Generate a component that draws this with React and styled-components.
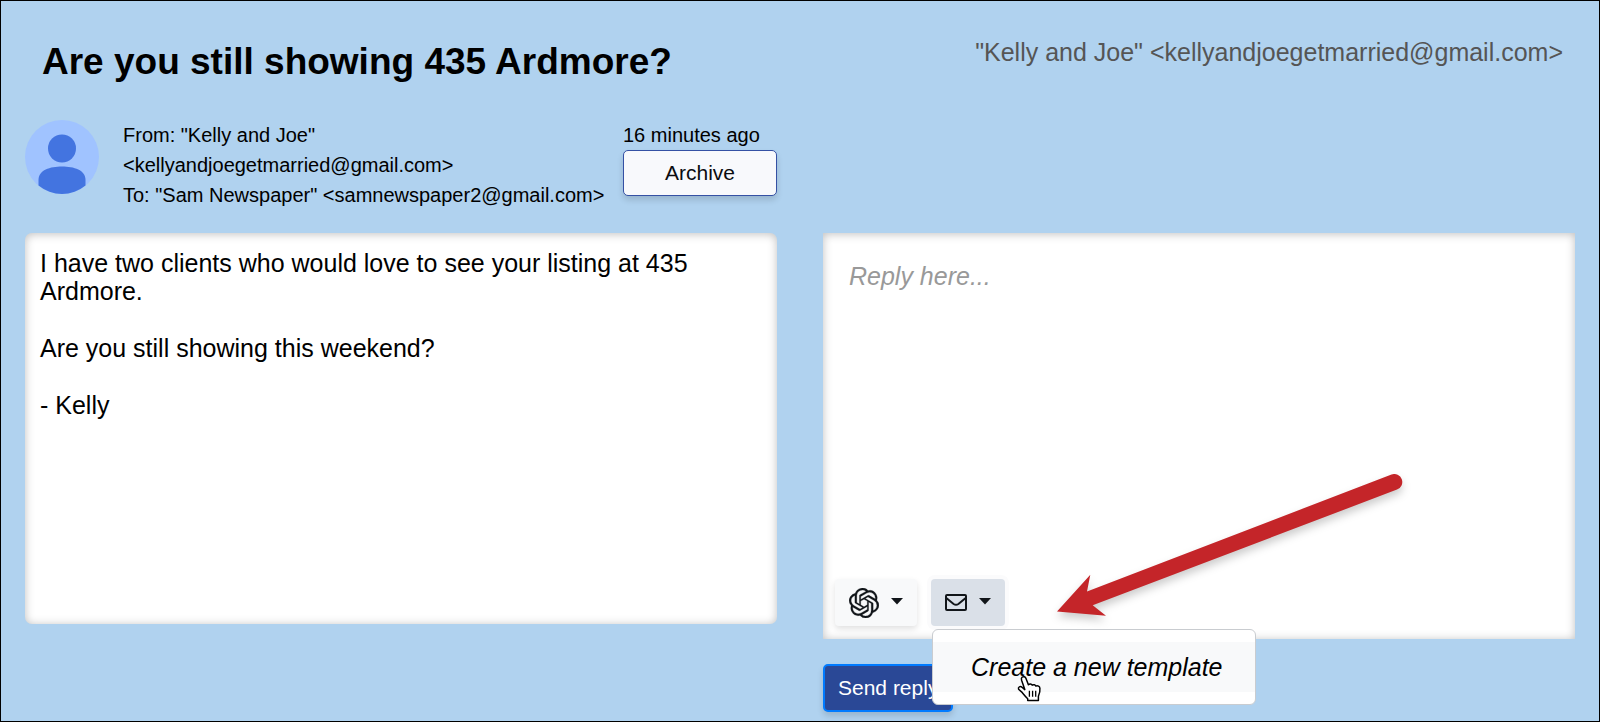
import React, { useState } from "react";
import styled, { createGlobalStyle, css } from "styled-components";
import { SiOpenai } from "react-icons/si";

const GlobalStyle = createGlobalStyle`
  * {
    box-sizing: border-box;
  }
  body {
    margin: 0;
    background: #b0d2ef;
    color: #000;
    font-family: "Liberation Sans", Arial, Helvetica, sans-serif;
  }
  button,
  textarea {
    font-family: inherit;
  }
`;

const Page = styled.main`
  min-height: 100vh;
  padding: 0 24px 9px;
  border: 1px solid #000;
`;

const Header = styled.header`
  display: flex;
  justify-content: space-between;
  align-items: flex-start;
  padding: 39px 12px 0 17px;
`;

const Subject = styled.h1`
  margin: 0;
  font-size: 37px;
  line-height: 44px;
  font-weight: 700;
`;

const SenderAddress = styled.span`
  color: #555;
  font-size: 25px;
  line-height: 24px;
`;

const Columns = styled.div`
  display: grid;
  grid-template-columns: repeat(2, minmax(0, 1fr));
  column-gap: 46px;
`;

const MetaRow = styled.div`
  display: flex;
  gap: 24px;
  padding: 36px 0 23px;
`;

const Avatar = styled.svg`
  flex: none;
  width: 74px;
  height: 74px;
`;

const Addresses = styled.div`
  flex: 1;
  min-width: 0;
  font-size: 20px;
  line-height: 30px;
  white-space: nowrap;
`;

const Actions = styled.div`
  display: flex;
  flex-direction: column;
  width: 154px;
  font-size: 20px;
  line-height: 30px;
`;

const Button = styled.button`
  height: 46px;
  padding: 0 12px;
  border: 1px solid #3551a4;
  border-radius: 5px;
  background: #f8f9fc;
  color: #0b0c10;
  font-size: 21px;
  cursor: pointer;
  box-shadow: 0 4px 6px rgba(0, 0, 0, 0.14);
  ${(p) =>
    p.$primary &&
    css`
      height: 48px;
      padding: 0 13px;
      border: 2px solid #007bff;
      background: #2a4896;
      color: #fff;
    `}
`;

const panel = css`
  background: #fff;
  box-shadow: inset 0 1px 10px rgba(0, 0, 0, 0.25);
`;

const Message = styled.article`
  ${panel}
  min-height: 391px;
  padding: 16px 15px;
  border-radius: 7px;
  font-size: 25px;
  line-height: 28px;

  p {
    margin: 0 0 29px;
  }
`;

const ReplyColumn = styled.form`
  display: flex;
  flex-direction: column;
  align-items: flex-start;
  gap: 25px;
`;

const Editor = styled.div`
  ${panel}
  position: relative;
  display: flex;
  flex-direction: column;
  width: 100%;
  height: 406px;
`;

const ReplyText = styled.textarea`
  flex: 1;
  width: 100%;
  padding: 29px 26px;
  border: 0;
  outline: none;
  resize: none;
  background: transparent;
  font-size: 25px;
  line-height: 28px;

  &::placeholder {
    color: #999;
    opacity: 1;
    font-style: italic;
  }
`;

const Toolbar = styled.div`
  display: flex;
  gap: 14px;
  padding: 0 12px 13px;
`;

const Dropdown = styled.div`
  position: relative;
`;

const ToolButton = styled.button`
  display: flex;
  align-items: center;
  gap: 12px;
  height: 47px;
  padding: 0 14px;
  border: 0;
  border-radius: 4px;
  background: ${(p) => (p.$open ? "#dae0e8" : "#f8f9fa")};
  color: #111519;
  cursor: pointer;
  box-shadow: ${(p) =>
    p.$open ? "0 0 0 4px #fbfbfc" : "0 3px 6px rgba(0, 0, 0, 0.12)"};
`;

const Menu = styled.div`
  position: absolute;
  z-index: 2;
  top: 50px;
  left: 1px;
  width: 324px;
  padding: 12px 0;
  border: 1px solid #c9ccd0;
  border-radius: 6px;
  background: #fff;
`;

const MenuItem = styled.button`
  display: block;
  width: 100%;
  height: 50px;
  padding: 0 38px;
  border: 0;
  background: #f8f9fa;
  color: #000;
  font-size: 25px;
  font-style: italic;
  text-align: left;
  white-space: nowrap;
  cursor: pointer;
`;

const Pointer = styled.svg`
  position: absolute;
  top: 45px;
  left: 84px;
  width: 26px;
  height: 28px;
  pointer-events: none;
`;

const Arrow = styled.svg`
  position: absolute;
  right: 165px;
  bottom: 15px;
  width: 360px;
  height: 160px;
  overflow: visible;
  pointer-events: none;
  filter: drop-shadow(0 5px 4px rgba(0, 0, 0, 0.2));
`;

function PersonIcon() {
  return (
    <Avatar viewBox="0 0 74 74" role="img" aria-label="Sender">
      <circle cx="37" cy="37" r="37" fill="#a0c3ff" />
      <circle cx="37" cy="28.5" r="14" fill="#4374e0" />
      <path
        d="M13.5 65.5V60C13.5 50 25 46.5 37 46.5S60.5 50 60.5 60v5.5A37 37 0 0 1 13.5 65.5Z"
        fill="#4374e0"
      />
    </Avatar>
  );
}

function EnvelopeIcon() {
  return (
    <svg width="22" height="17" viewBox="0 0 22 17" fill="none">
      <rect
        x="1"
        y="1"
        width="20"
        height="15"
        rx="1"
        stroke="currentColor"
        strokeWidth="2"
      />
      <path
        d="M1.3 4 8.6 10Q11 11.7 13.4 10L20.7 4"
        stroke="currentColor"
        strokeWidth="2"
      />
    </svg>
  );
}

function Caret() {
  return (
    <svg width="12" height="10" viewBox="0 0 12 10" fill="currentColor">
      <path d="M0 0h12L6 6.5Z" />
    </svg>
  );
}

function HandPointer() {
  return (
    <Pointer viewBox="0 0 26 28" aria-hidden="true">
      <path
        d="M5 2.3C6.5 1 8.4 1.9 9 3.5L11.4 9.8C12.6 8.6 14.4 8.8 15.2 10.2C16.5 9.2 18.3 9.7 18.9 11.1C20.7 10.4 22.7 11.3 22.9 13.3C23.2 16.3 22.6 18.7 21.4 21.2V25.5H10.7V23.8C8.4 21.6 6.7 19.4 4.8 17.1L1.6 14.2C.8 12.4 2.9 10.9 4.7 12L7.8 14.6L4.6 5.2C4.3 4.1 4.2 3 5 2.3Z"
        fill="#fff"
        stroke="#000"
        strokeWidth="1.5"
        strokeLinejoin="round"
      />
      <path
        d="M12.4 15.7v6M15.6 15.7v6M18.7 15.7v6"
        stroke="#000"
        strokeWidth="1.3"
      />
    </Pointer>
  );
}

function TemplateMenu() {
  return (
    <Menu role="menu">
      <MenuItem type="button" role="menuitem">
        Create a new template
      </MenuItem>
      <HandPointer />
    </Menu>
  );
}

function ReplyForm() {
  const [reply, setReply] = useState("");
  const [menuOpen, setMenuOpen] = useState(true);
  return (
    <ReplyColumn onSubmit={(e) => e.preventDefault()}>
      <Editor>
        <ReplyText
          aria-label="Reply"
          placeholder="Reply here..."
          value={reply}
          onChange={(e) => setReply(e.target.value)}
        />
        <Toolbar>
          <ToolButton type="button" aria-label="AI reply">
            <SiOpenai size={30} stroke="currentColor" strokeWidth={0.2} />
            <Caret />
          </ToolButton>
          <Dropdown>
            <ToolButton
              type="button"
              aria-label="Templates"
              aria-expanded={menuOpen}
              $open={menuOpen}
              onClick={() => setMenuOpen(!menuOpen)}
            >
              <EnvelopeIcon />
              <Caret />
            </ToolButton>
            {menuOpen && <TemplateMenu />}
          </Dropdown>
        </Toolbar>
        <Arrow viewBox="1050 464 360 160" aria-hidden="true">
          <path
            d="M1057 611.5 1090.3 574.8 1087 591.5 1391.5 474.5A8 8 0 0 1 1397 489.6L1092.7 605.3 1106 615.8Z"
            fill="#c42529"
          />
        </Arrow>
      </Editor>
      <Button type="submit" $primary>
        Send reply
      </Button>
    </ReplyColumn>
  );
}

export default function App() {
  return (
    <>
      <GlobalStyle />
      <Page>
        <Header>
          <Subject>Are you still showing 435 Ardmore?</Subject>
          <SenderAddress>
            "Kelly and Joe" &lt;kellyandjoegetmarried@gmail.com&gt;
          </SenderAddress>
        </Header>
        <Columns>
          <MetaRow>
            <PersonIcon />
            <Addresses>
              <div>From: "Kelly and Joe"</div>
              <div>&lt;kellyandjoegetmarried@gmail.com&gt;</div>
              <div>To: "Sam Newspaper" &lt;samnewspaper2@gmail.com&gt;</div>
            </Addresses>
            <Actions>
              <time>16 minutes ago</time>
              <Button type="button">Archive</Button>
            </Actions>
          </MetaRow>
        </Columns>
        <Columns>
          <div>
            <Message>
              <p>
                I have two clients who would love to see your listing at 435
                Ardmore.
              </p>
              <p>Are you still showing this weekend?</p>
              <p>- Kelly</p>
            </Message>
          </div>
          <ReplyForm />
        </Columns>
      </Page>
    </>
  );
}
